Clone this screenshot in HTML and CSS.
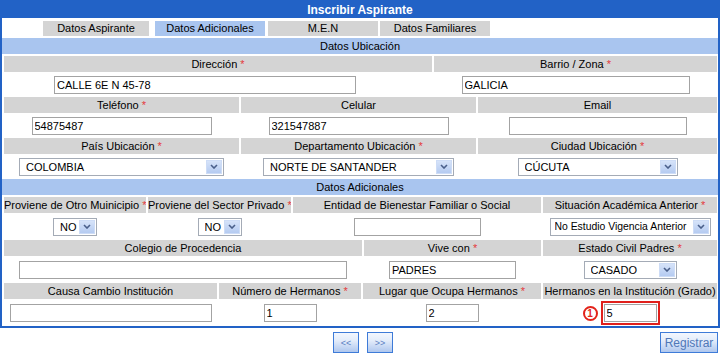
FILE: index.html
```html
<!DOCTYPE html>
<html lang="es">
<head>
<meta charset="utf-8">
<title>Inscribir Aspirante</title>
<link rel="stylesheet" href="styles.css">
</head>
<body>
<div class="panel">
  <div class="title">Inscribir Aspirante</div>
  <div class="tabs">
    <div class="tab t1">Datos Aspirante</div>
    <div class="tab t2 active">Datos Adicionales</div>
    <div class="tab t3">M.E.N</div>
    <div class="tab t4">Datos Familiares</div>
  </div>
  <div class="body">
    <div class="section">Datos Ubicación</div>

    <div class="grp g-dir">
      <div class="lbl">Dirección <span class="req">*</span></div>
      <div class="lbl">Barrio / Zona <span class="req">*</span></div>
      <div class="ctl ctl-dir"><input class="inp w-dir" value="CALLE 6E N 45-78"></div>
      <div class="ctl"><input class="inp w-barrio" value="GALICIA"></div>
    </div>

    <div class="grp g-three">
      <div class="lbl">Teléfono <span class="req">*</span></div>
      <div class="lbl">Celular</div>
      <div class="lbl">Email</div>
      <div class="ctl"><input class="inp w-tel" value="54875487"></div>
      <div class="ctl"><input class="inp w-tel" value="321547887"></div>
      <div class="ctl"><input class="inp w-email" value=""></div>
    </div>

    <div class="grp g-three">
      <div class="lbl">País Ubicación <span class="req">*</span></div>
      <div class="lbl">Departamento Ubicación <span class="req">*</span></div>
      <div class="lbl">Ciudad Ubicación <span class="req">*</span></div>
      <div class="ctl">
        <div class="sel w-pais"><span class="val">COLOMBIA</span><span class="arr"><svg width="8" height="5" viewBox="0 0 8 5"><path d="M1 1l3 3 3-3" fill="none" stroke="#4a5f8a" stroke-width="1.6"/></svg></span></div>
      </div>
      <div class="ctl">
        <div class="sel w-dep"><span class="val">NORTE DE SANTANDER</span><span class="arr"><svg width="8" height="5" viewBox="0 0 8 5"><path d="M1 1l3 3 3-3" fill="none" stroke="#4a5f8a" stroke-width="1.6"/></svg></span></div>
      </div>
      <div class="ctl">
        <div class="sel w-ciudad"><span class="val">CÚCUTA</span><span class="arr"><svg width="8" height="5" viewBox="0 0 8 5"><path d="M1 1l3 3 3-3" fill="none" stroke="#4a5f8a" stroke-width="1.6"/></svg></span></div>
      </div>
    </div>

    <div class="section sec2">Datos Adicionales</div>

    <div class="grp tall g-prov">
      <div class="lbl">Proviene de Otro Muinicipio <span class="req">*</span></div>
      <div class="lbl">Proviene del Sector Privado <span class="req">*</span></div>
      <div class="lbl">Entidad de Bienestar Familiar o Social</div>
      <div class="lbl">Situación Académica Anterior <span class="req">*</span></div>
      <div class="ctl">
        <div class="sel w-no"><span class="val">NO</span><span class="arr"><svg width="8" height="5" viewBox="0 0 8 5"><path d="M1 1l3 3 3-3" fill="none" stroke="#4a5f8a" stroke-width="1.6"/></svg></span></div>
      </div>
      <div class="ctl">
        <div class="sel w-no"><span class="val">NO</span><span class="arr"><svg width="8" height="5" viewBox="0 0 8 5"><path d="M1 1l3 3 3-3" fill="none" stroke="#4a5f8a" stroke-width="1.6"/></svg></span></div>
      </div>
      <div class="ctl"><input class="inp w-ent" value=""></div>
      <div class="ctl">
        <div class="sel w-sit"><span class="val">No Estudio Vigencia Anterior</span><span class="arr"><svg width="8" height="5" viewBox="0 0 8 5"><path d="M1 1l3 3 3-3" fill="none" stroke="#4a5f8a" stroke-width="1.6"/></svg></span></div>
      </div>
    </div>

    <div class="grp tall g-col">
      <div class="lbl">Colegio de Procedencia</div>
      <div class="lbl">Vive con <span class="req">*</span></div>
      <div class="lbl">Estado Civil Padres <span class="req">*</span></div>
      <div class="ctl"><input class="inp w-col" value=""></div>
      <div class="ctl"><input class="inp w-ent" value="PADRES"></div>
      <div class="ctl">
        <div class="sel w-estado"><span class="val">CASADO</span><span class="arr"><svg width="8" height="5" viewBox="0 0 8 5"><path d="M1 1l3 3 3-3" fill="none" stroke="#4a5f8a" stroke-width="1.6"/></svg></span></div>
      </div>
    </div>

    <div class="grp tall g-her">
      <div class="lbl">Causa Cambio Institución</div>
      <div class="lbl">Número de Hermanos <span class="req">*</span></div>
      <div class="lbl">Lugar que Ocupa Hermanos <span class="req">*</span></div>
      <div class="lbl">Hermanos en la Institución (Grado)</div>
      <div class="ctl"><input class="inp w-causa" value=""></div>
      <div class="ctl"><input class="inp w-num" value="1"></div>
      <div class="ctl"><input class="inp w-num" value="2"></div>
      <div class="ctl">
        <span class="mark"><span class="badge">1</span><input class="inp w-num" value="5"></span>
      </div>
    </div>
  </div>
</div>

<div class="actions">
  <div class="nav">
    <button class="btn btn-nav" type="button">&lt;&lt;</button>
    <button class="btn btn-nav" type="button">&gt;&gt;</button>
  </div>
  <button class="btn btn-reg" type="button">Registrar</button>
</div>
</body>
</html>
```

FILE: styles.css
```css
body {
  margin: 0;
  background: #fff;
  color: #000;
  font-family: "Liberation Sans", Arial, sans-serif;
  font-size: 11px;
}

.panel {
  width: 720px;
  box-sizing: border-box;
  border: 2px solid #2262c6;
}

.title {
  height: 16px;
  line-height: 16px;
  background: #2262c6;
  color: #fff;
  font-weight: bold;
  font-size: 12px;
  text-align: center;
}

.tabs {
  display: flex;
  height: 15px;
  padding: 3px 0 2px 41px;
}

.tab {
  width: 110px;
  height: 15px;
  line-height: 15px;
  text-align: center;
  background: #d4d4d4;
  color: #000;
}

.tab.t1 { width: 106px; margin-right: 6px; }
.tab.t2 { margin-right: 3px; }
.tab.t3 { margin-right: 2px; }
.tab.active { background: #a9c5ef; }

.body {
  padding: 0 1px 2px 2px;
}

.section {
  height: 16px;
  line-height: 16px;
  margin: 0 -1px 0 -2px;
  background: #a9c5ef;
  text-align: center;
  color: #000;
}

.section.sec2 { margin-top: 2px; }

.grp {
  display: grid;
  gap: 2px;
  grid-template-rows: 16px 21px;
  margin-top: 2px;
}

.grp.tall { grid-template-rows: 16px 23px; }

.g-dir { grid-template-columns: 428px 283px; }
.g-three { grid-template-columns: 235px 235px 239px; }
.g-prov { grid-template-columns: 142px 143px 248px 174px; }
.g-col { grid-template-columns: 358px 177px 174px; }
.g-her { grid-template-columns: 213px 142px 178px 174px; }

.lbl {
  background: #d4d4d4;
  line-height: 17px;
  text-align: center;
  white-space: nowrap;
  overflow: hidden;
  color: #000;
}

.req { color: #e4393c; }

.ctl {
  display: flex;
  align-items: center;
  justify-content: center;
}

.ctl.ctl-dir {
  justify-content: flex-start;
  padding-left: 50px;
}

.inp {
  box-sizing: border-box;
  height: 18px;
  margin: 0;
  padding: 0 2px;
  border: 1px solid #a3a3a3;
  background: #fff;
  color: #000;
  font-family: "Liberation Sans", Arial, sans-serif;
  font-size: 11px;
}

.w-dir { width: 302px; }
.w-barrio { width: 228px; }
.w-tel { width: 180px; }
.w-email { width: 178px; }
.w-ent { width: 127px; }
.w-col { width: 328px; }
.w-causa { width: 202px; }
.w-num { width: 53px; }

.sel {
  box-sizing: border-box;
  display: flex;
  align-items: center;
  height: 18px;
  padding-left: 6px;
  border: 1px solid #a4abb6;
  background: #fff;
  color: #000;
}

.sel .val {
  flex: 1;
  white-space: nowrap;
  overflow: hidden;
}

.sel .arr {
  box-sizing: border-box;
  display: flex;
  align-items: center;
  justify-content: center;
  width: 16px;
  height: 14px;
  margin-right: 1px;
  border: 1px solid #cddcf6;
  background: linear-gradient(#d6e3f9, #b5cbf1);
}

.w-pais { width: 205px; }
.w-dep { width: 191px; }
.w-ciudad { width: 160px; }
.w-no { width: 44px; }
.w-sit { width: 161px; padding-left: 4px; }
.w-sit .val { font-size: 10.4px; }
.w-estado { width: 93px; }

.mark {
  position: relative;
  display: inline-flex;
}

.mark .inp {
  outline: 2px solid #e0201c;
  outline-offset: 1px;
}

.badge {
  position: absolute;
  left: -21px;
  top: 2px;
  box-sizing: border-box;
  width: 15px;
  height: 15px;
  border: 2px solid #e3241b;
  border-radius: 50%;
  color: #e3241b;
  font-weight: bold;
  font-size: 10px;
  line-height: 11px;
  text-align: center;
}

.actions {
  display: grid;
  grid-template-columns: 1fr auto 1fr;
  width: 726px;
  margin-top: 4px;
}

.nav {
  grid-column: 2;
  display: flex;
  gap: 8px;
}

.btn {
  box-sizing: border-box;
  height: 21px;
  margin: 0;
  padding: 0;
  border: 1px solid #3e7bd8;
  background: linear-gradient(#f3f7fe 0%, #e3ecfa 40%, #afc7ee 100%);
  color: #5a80c2;
  font-family: "Liberation Sans", Arial, sans-serif;
}

.btn-nav {
  width: 26px;
  font-size: 9px;
}

.btn-reg {
  grid-column: 3;
  justify-self: end;
  width: 58px;
  margin-right: 8px;
  font-size: 12px;
  color: #4f77b8;
}
```
